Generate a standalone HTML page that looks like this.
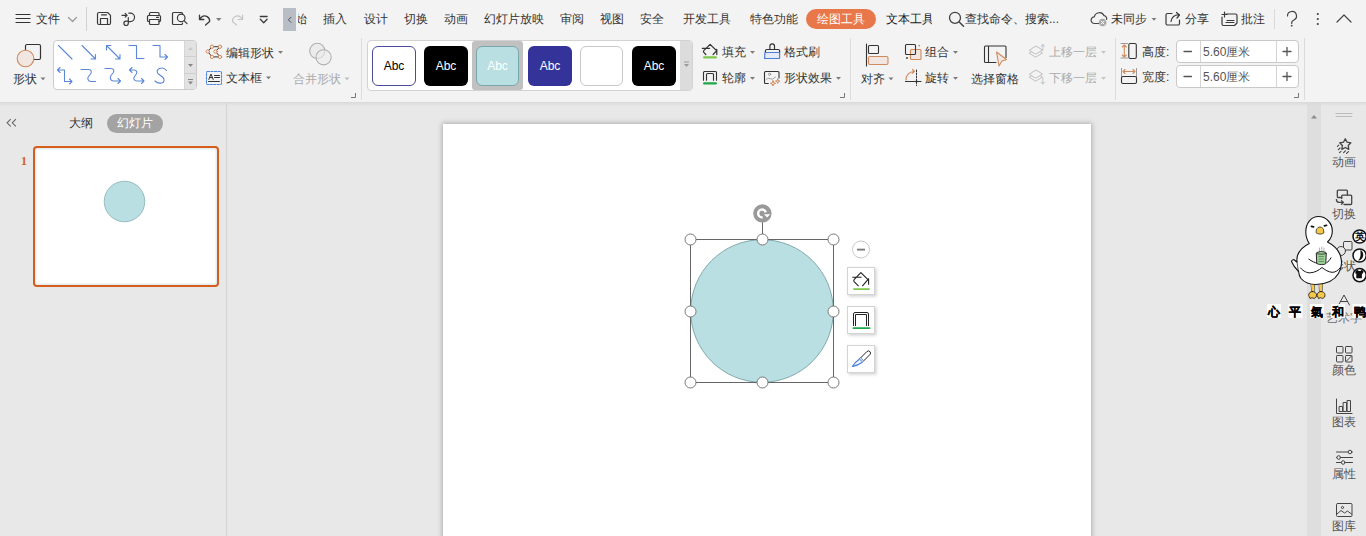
<!DOCTYPE html>
<html><head><meta charset="utf-8">
<style>
*{margin:0;padding:0;box-sizing:border-box}
html,body{width:1366px;height:536px;overflow:hidden;background:#e8e8e8;font-family:"Liberation Sans",sans-serif;color:#333}
.a{position:absolute}
.t{position:absolute;white-space:nowrap;font-size:12px;line-height:14px;color:#333}
svg.ov{position:absolute;left:0;top:0;overflow:visible}
#ribbon{position:absolute;left:0;top:0;width:1366px;height:102px;background:#f3f3f3}
#shadow{position:absolute;left:0;top:102px;width:1366px;height:4px;background:linear-gradient(#d9d9d9,rgba(230,230,230,0))}
#left{position:absolute;left:0;top:102px;width:226px;height:434px;background:#e8e8e8}
#ldiv{position:absolute;left:226px;top:102px;width:1px;height:434px;background:#d4d4d4}
#slide{position:absolute;left:443px;top:124px;width:648px;height:420px;background:#fff;box-shadow:0 0 5px 1px rgba(0,0,0,.25)}
#sbar{position:absolute;left:1307px;top:102px;width:14px;height:434px;background:#dedede}
#rpanel{position:absolute;left:1321px;top:102px;width:45px;height:434px;background:#e8e8e8}
.g{color:#aaa}
.w{color:#fff}
.abc{position:absolute;top:46px;width:44px;height:40px;border-radius:6px;font-size:12px;line-height:40px;text-align:center}
.spin{position:absolute;left:1176px;width:123px;height:23px;border:1px solid #c9c9c9;border-radius:4px;background:#fff}
.spin i{position:absolute;top:0;width:1px;height:21px;background:#d4d4d4}
.rp{position:absolute;left:1321px;width:45px;text-align:center;font-size:12px;line-height:14px;color:#555}
</style></head><body>
<div id="ribbon"></div>
<div id="left"></div>
<div id="ldiv"></div>
<div id="sbar"></div>
<div id="rpanel"></div>
<div id="shadow"></div>
<div id="slide"></div>

<!-- top menu row -->
<div class="t" style="left:36px;top:12px">文件</div>
<div class="a" style="left:283px;top:8px;width:13px;height:23px;background:#b9bdc5"></div>
<div class="a" style="left:298px;top:12px;width:12px;height:16px;overflow:hidden"><div class="t" style="left:-15px;top:0">开始</div></div>
<div class="t" style="left:323px;top:12px">插入</div>
<div class="t" style="left:364px;top:12px">设计</div>
<div class="t" style="left:404px;top:12px">切换</div>
<div class="t" style="left:444px;top:12px">动画</div>
<div class="t" style="left:484px;top:12px">幻灯片放映</div>
<div class="t" style="left:560px;top:12px">审阅</div>
<div class="t" style="left:600px;top:12px">视图</div>
<div class="t" style="left:640px;top:12px">安全</div>
<div class="t" style="left:683px;top:12px">开发工具</div>
<div class="t" style="left:750px;top:12px">特色功能</div>
<div class="a" style="left:806px;top:9px;width:70px;height:20px;border-radius:10px;background:#e8774a"></div>
<div class="t w" style="left:817px;top:12px">绘图工具</div>
<div class="a" style="left:886px;top:12px;width:46px;height:13px;overflow:hidden"><div class="t" style="left:0;top:0;color:#1a1a1a">文本工具</div></div>
<div class="t" style="left:965px;top:12px">查找命令、搜索...</div>
<div class="t" style="left:1111px;top:12px">未同步</div>
<div class="t" style="left:1185px;top:12px">分享</div>
<div class="t" style="left:1241px;top:12px">批注</div>

<!-- ribbon: gallery boxes -->
<div class="a" style="left:53px;top:40px;width:144px;height:50px;border:1px solid #cbcbcb;border-radius:4px;background:#fff"></div>
<div class="a" style="left:184px;top:41px;width:12px;height:48px;background:#e2e2e2;border-left:1px solid #d6d6d6;border-radius:0 3px 3px 0"></div>
<div class="a" style="left:184px;top:56px;width:12px;height:1px;background:#cfcfcf"></div>
<div class="a" style="left:184px;top:73px;width:12px;height:1px;background:#cfcfcf"></div>

<div class="a" style="left:367px;top:40px;width:326px;height:51px;border:1px solid #d2d2d2;border-radius:4px;background:#fff"></div>
<div class="a" style="left:680px;top:41px;width:12px;height:49px;background:#dcdcdc;border-radius:0 3px 3px 0"></div>
<div class="abc" style="left:372px;border:1.6px solid #4b4b9b;background:#fff;color:#000;line-height:39px">Abc</div>
<div class="abc" style="left:424px;background:#000;color:#fff">Abc</div>
<div class="a" style="left:472px;top:41px;width:51px;height:49px;border-radius:3px;background:#c1c1c1"></div>
<div class="abc" style="left:476px;width:43px;border:1.5px solid #7aa7a9;background:#b9dfe2;color:#fff;line-height:39px">Abc</div>
<div class="abc" style="left:528px;background:#333399;color:#fff">Abc</div>
<div class="abc" style="left:580px;width:43px;border:1.5px solid #c8c8c8;background:#fff"></div>
<div class="abc" style="left:632px;background:#000;color:#fff">Abc</div>

<!-- ribbon labels -->
<div class="t" style="left:13px;top:72px">形状</div>
<div class="t" style="left:226px;top:46px">编辑形状</div>
<div class="t" style="left:226px;top:71px">文本框</div>
<div class="t g" style="left:293px;top:72px">合并形状</div>
<div class="t" style="left:722px;top:45px">填充</div>
<div class="t" style="left:784px;top:45px">格式刷</div>
<div class="t" style="left:722px;top:71px">轮廓</div>
<div class="t" style="left:784px;top:71px">形状效果</div>
<div class="t" style="left:861px;top:72px">对齐</div>
<div class="t" style="left:925px;top:45px">组合</div>
<div class="t" style="left:925px;top:71px">旋转</div>
<div class="t" style="left:971px;top:72px">选择窗格</div>
<div class="t g" style="left:1049px;top:45px">上移一层</div>
<div class="t g" style="left:1049px;top:71px">下移一层</div>
<div class="t" style="left:1142px;top:45px">高度:</div>
<div class="t" style="left:1142px;top:70px">宽度:</div>

<div class="spin" style="top:40px"><i style="left:23px"></i><i style="left:99px"></i></div>
<div class="spin" style="top:65px"><i style="left:23px"></i><i style="left:99px"></i></div>
<div class="t" style="left:1203px;top:45px;color:#555">5.60厘米</div>
<div class="t" style="left:1203px;top:70px;color:#555">5.60厘米</div>

<!-- left panel -->
<svg class="ov" width="1366" height="536"><path d="M10.7 119.2l-3.6 3.6 3.6 3.6M15.9 119.2l-3.6 3.6 3.6 3.6" fill="none" stroke="#666" stroke-width="1.1"/></svg>
<div class="t" style="left:69px;top:116px">大纲</div>
<div class="a" style="left:107px;top:114px;width:56px;height:19px;border-radius:10px;background:#a3a3a3"></div>
<div class="t w" style="left:117px;top:116px">幻灯片</div>
<div class="t" style="left:21px;top:154px;color:#d2651f;font-weight:bold;font-size:12px;font-family:'Liberation Serif',serif">1</div>
<div class="a" style="left:33px;top:146px;width:186px;height:141px;border:2px solid #d65e1c;border-radius:4px;background:#fff;box-shadow:inset 0 0 0 1.5px #e6ecee"></div>

<!-- right panel labels -->
<div class="rp" style="top:155px">动画</div>
<div class="rp" style="top:207px">切换</div>
<div class="rp" style="top:259px">形状</div>
<div class="rp" style="top:311px;color:#6b6b6b">艺术字</div>
<div class="rp" style="top:363px">颜色</div>
<div class="rp" style="top:415px">图表</div>
<div class="rp" style="top:467px">属性</div>
<div class="rp" style="top:519px">图库</div>

<svg class="ov" width="1366" height="536" viewBox="0 0 1366 536">
<g fill="none" stroke="#3a3a3a" stroke-width="1.2" stroke-linecap="round" stroke-linejoin="round">
  <!-- hamburger -->
  <path d="M16 14.5H30M16 18.5H30M16 22.5H30" stroke="#333"/>
  <path d="M68.5 17.5L72.5 21.5L76.5 17.5" stroke="#999"/>
  <!-- save -->
  <path d="M97.5 23v-9a1.5 1.5 0 0 1 1.5-1.5h8.6l2.9 2.9v7.6a1.5 1.5 0 0 1-1.5 1.5h-10a1.5 1.5 0 0 1-1.5-1.5z"/>
  <path d="M100.5 24.5v-6h7v6M101.5 14.8h5"/>
  <!-- convert/export -->
  <path d="M122 15.3h5M125.2 13.4l1.9 1.9-1.9 1.9M128.8 13.1h1.5a4.25 4.25 0 0 1 0 8.5h-1.5M128.3 17.5v5.8a2.2 2.2 0 1 1-2.2-2.2h2.2" stroke-width="1.2"/>
  <!-- print -->
  <path d="M149.5 15v-1.5a1 1 0 0 1 1-1h7.5a1 1 0 0 1 1 1V15M149.5 21.5h-1a1 1 0 0 1-1-1v-4a1 1 0 0 1 1-1h11a1 1 0 0 1 1 1v4a1 1 0 0 1-1 1h-1M149.5 19.5h9.5v4a1 1 0 0 1-1 1h-7.5a1 1 0 0 1-1-1zM156.5 17.3h2"/>
  <!-- preview -->
  <path d="M182.5 14v-.5a1 1 0 0 0-1-1h-8a1 1 0 0 0-1 1v10a1 1 0 0 0 1 1h8a1 1 0 0 0 1-1v-.5"/>
  <circle cx="181.2" cy="17.9" r="3.8"/><path d="M184 20.7l3 3"/>
  <!-- undo -->
  <path d="M199.5 15.2v4.3h4.3M199.8 19.2L201.6 17A5 5 0 0 1 209.6 21.6L205.6 25" stroke-width="1.3"/>
  <path d="M242.6 15v4.5h-4.5M242.3 19.2L240.5 17A5 5 0 0 0 232.5 21.6L236.5 25" stroke="#c2c2c2" stroke-width="1.1"/>
  <path d="M260.3 16.5h6.8M260.3 19.3l3.4 3.4 3.4-3.4" stroke-width="1.3"/>
  <path d="M291 17.2l-2.6 2.6 2.6 2.6" stroke="#444" stroke-width=".9"/>
  <!-- search -->
  <circle cx="955" cy="17.8" r="5.5" stroke="#444" stroke-width="1.3"/><path d="M959.2 22l4.3 4.3" stroke="#444" stroke-width="1.5"/>
  <!-- cloud -->
  <path d="M1098.5 23.5h-4a3.3 3.3 0 0 1-.2-6.6a5.2 5.2 0 0 1 9.8-1.2a3.2 3.2 0 0 1 2.6 3.8" stroke="#444" stroke-width="1.2"/>
  <circle cx="1102.6" cy="22.5" r="3.8" fill="#a5a5a5" stroke="none"/>
  <path d="M1101 21l3.2 3.2M1104.2 21l-3.2 3.2" stroke="#fff" stroke-width="1"/>
  <!-- share -->
  <path d="M1172 13.5h-4.5a1.5 1.5 0 0 0-1.5 1.5v8.5a1.5 1.5 0 0 0 1.5 1.5h10.5a1.5 1.5 0 0 0 1.5-1.5v-3.5M1171 21.5a7 7 0 0 1 8-6.5M1176.5 12.5l3 2.5-2.5 3"/>
  <!-- comment -->
  <path d="M1226 14h9.5a1.5 1.5 0 0 1 1.5 1.5v7.5l-2.5 2.5h-11a1.5 1.5 0 0 1-1.5-1.5v-7M1224.5 12v5M1222 14.5h5M1227 20.5h7M1226 22.5h8"/>
  <!-- help, more, collapse -->
  <path d="M1287.5 16a4.5 4.5 0 1 1 6 4.2c-1.3.6-1.8 1.4-1.8 2.8v.5" stroke="#444"/>
  <circle cx="1291.7" cy="25.7" r=".9" fill="#444" stroke="none"/>
  <circle cx="1317.8" cy="14" r="1.1" fill="#444" stroke="none"/>
  <circle cx="1317.8" cy="19" r="1.1" fill="#444" stroke="none"/>
  <circle cx="1317.8" cy="24" r="1.1" fill="#444" stroke="none"/>
  <path d="M1337 22l7-7 7 7" stroke="#444"/>
</g>
<!-- separators -->
<g fill="#d0d0d0">
  <rect x="86" y="7" width="1" height="24"/>
  <rect x="1274" y="9" width="1" height="20" fill="#dadada"/>
  <rect x="361" y="38" width="1" height="62" fill="#dcdcdc"/>
  <rect x="850" y="38" width="1" height="62" fill="#dcdcdc"/>
  <rect x="1115" y="38" width="1" height="62" fill="#dcdcdc"/>
  <rect x="1304" y="38" width="1" height="62" fill="#dcdcdc"/>
</g>
<!-- corner markers -->
<g fill="none" stroke="#777" stroke-width="1">
  <path d="M351 97.5h4.5v-4.5M840 97.5h4.5v-4.5M1294 97.5h4.5v-4.5"/>
</g>
<!-- dropdown arrows -->
<g fill="#7a7a7a">
  <path d="M216 18h5.5l-2.75 3z"/>
  <path d="M40.5 77.5h5l-2.5 2.8z"/>
  <path d="M278 51h5l-2.5 2.8z"/>
  <path d="M266 76.5h5l-2.5 2.8z"/>
  <path d="M344.5 77.5h5l-2.5 2.8z" fill="#bdbdbd"/>
  <path d="M750 51h5l-2.5 2.8z"/>
  <path d="M750 77h5l-2.5 2.8z"/>
  <path d="M836 77h5l-2.5 2.8z"/>
  <path d="M888.5 77.5h5l-2.5 2.8z"/>
  <path d="M953 51h5l-2.5 2.8z"/>
  <path d="M953 77h5l-2.5 2.8z"/>
  <path d="M1101 51h5l-2.5 2.8z" fill="#c5c5c5"/>
  <path d="M1101 77h5l-2.5 2.8z" fill="#c5c5c5"/>
  <path d="M1151.5 18h5l-2.5 2.8z"/>
  <!-- gallery scroll arrows -->
  <path d="M188 50h5l-2.5-3z" fill="#c8c8c8"/>
  <path d="M188 64h5l-2.5 3z" fill="#888"/>
  <path d="M188 81.5h5l-2.5 3z" fill="#888"/>
  <rect x="188" y="79" width="5" height="1" fill="#888"/>
  <path d="M684 64h5l-2.5 3z" fill="#999"/>
  <rect x="684" y="61.5" width="5" height="1" fill="#999"/>
</g>
</svg>


<!-- ribbon icons -->
<svg class="ov" width="1366" height="536" viewBox="0 0 1366 536">
<g fill="none" stroke-linecap="round" stroke-linejoin="round">
  <!-- shape -->
  <rect x="25.5" y="44.5" width="15" height="15" rx="1.5" stroke="#333" stroke-width="1.2"/>
  <circle cx="25.5" cy="58.5" r="8.3" fill="#f1e6e1" stroke="#d08a5c" stroke-width="1.1"/>
  <!-- line gallery -->
  <g stroke="#5b88d6" stroke-width="1.1">
    <path d="M58.5 45.5l13.5 13.5"/>
    <path d="M82 45.5l13.5 13.5M95.5 59v-4.5M95.5 59h-4.5"/>
    <path d="M106.5 45.5l13.5 13.5M106.5 45.5v4.5M106.5 45.5h4.5M120 59v-4.5M120 59h-4.5"/>
    <path d="M129 45.5h7.5v13h7.5"/>
    <path d="M153 45.5h7v11.5h7.5M165 54.5l2.5 2.5-2.5 2.5"/>
    <path d="M64.5 70h-7M60 67.5l-2.5 2.5 2.5 2.5M64.5 70v11.5h7.5M69.5 79l2.5 2.5-2.5 2.5"/>
    <path d="M81 69.5h7.5c3 0 3.5 2.5 2 4.5l-2 2.5c-1.5 2-.5 5 2.5 5h4.5"/>
    <path d="M105 68.5h6c3 0 3.5 2.5 2 4.5l-2 2.5c-1.5 2-.5 5.5 2.5 5.5h7M118 78.5l2.5 2.5-2.5 2.5"/>
    <path d="M129.5 70h4.5c3 0 3.5 2.5 2 4.5l-1.5 2c-1.5 2-.5 4.5 2.5 4.5h6.5M132 67.5l-2.5 2.5 2.5 2.5M141.5 78.5l2.5 2.5-2.5 2.5"/>
    <path d="M166.5 70.5c-1.5-2-4.5-3-7-2-3 1.2-3 4-1 5.5l4 3c2.5 2 2 5.5-1 6-2.5.5-5-.5-6.5-2"/>
  </g>
  <!-- edit shape -->
  <path d="M212 46.7h8M212 46.7l-4.2 4.8 4.2 5.4h8l-4.5-5.4 4.5-4.8" stroke="#333" stroke-width="1"/>
  <g fill="#f3f3f3" stroke="#d08a5c" stroke-width="1">
    <circle cx="212" cy="46.7" r="1.7"/><circle cx="220" cy="46.7" r="1.7"/>
    <circle cx="207.8" cy="51.5" r="1.7"/><circle cx="215.5" cy="51.5" r="1.7"/>
    <circle cx="212" cy="56.9" r="1.7"/><circle cx="220" cy="56.9" r="1.7"/>
  </g>
  <!-- textbox -->
  <rect x="206.5" y="71.5" width="15" height="13" rx="1" stroke="#4a86e0" stroke-width="1.1" stroke-dasharray="2.2 1.3"/>
  <path d="M208.8 79.5l2.2-5.5 2.2 5.5M209.6 77.6h2.8M214.5 75.5h5M214.5 77.5h5M208.5 81.5h11" stroke="#333" stroke-width="1"/>
  <!-- merge -->
  <circle cx="317.3" cy="50.9" r="7.6" fill="#ececec" stroke="#b0b0b0" stroke-width="1.1"/>
  <circle cx="323.6" cy="57.3" r="7.6" fill="#ececec" fill-opacity=".6" stroke="#b0b0b0" stroke-width="1.1"/>
  <!-- fill -->
  <path d="M702.3 48.3h7.3M705.8 54.5l-2-2.1a1.3 1.3 0 0 1 0-1.8l6.3-6.2 6.6 6.3-3.6 3.8M716.8 49.4v5.2" stroke="#333" stroke-width="1.2"/>
  <rect x="703" y="56.3" width="14" height="2.3" rx="1.15" fill="#7fc84e"/>
  <!-- format brush -->
  <path d="M769.9 49.5v-3.4a2.3 2.3 0 0 1 4.6 0v3.4M765.4 52.5v-1.5a1.5 1.5 0 0 1 1.5-1.5h11.2a1.5 1.5 0 0 1 1.5 1.5v1.5" stroke="#333" stroke-width="1.2"/>
  <path d="M765 52.5h14.6v5.2a.8.8 0 0 1-.8.8h-14.3z" fill="#e5eaf4" stroke="#4a7fd8" stroke-width="1.2"/>
  <!-- outline -->
  <path d="M703.5 80.8v-8.3a1 1 0 0 1 1-1h11a1 1 0 0 1 1 1v8.3M706.5 80.8v-6.3a1 1 0 0 1 1-1h5a1 1 0 0 1 1 1v6.3" stroke="#333" stroke-width="1.1" stroke-linecap="butt"/>
  <rect x="703" y="82.3" width="14" height="2.3" rx="1.15" fill="#1fa84a"/>
  <!-- shape effect -->
  <path d="M768.3 83.5h-2.8a1 1 0 0 1-1-1v-10a1 1 0 0 1 1-1h12.5a1 1 0 0 1 1 1v5.5" stroke="#333" stroke-width="1.1"/>
  <circle cx="769.6" cy="74.3" r="1.1" stroke="#888" stroke-width=".8"/>
  <path d="M766 79.8c1-1 2-1.8 3-1.5 1 .3 1.8 1 3 .8 1.2-.2 2-1.2 3.5-2" stroke="#888" stroke-width=".8"/>
  <path d="M773 80.8l.7 1.9 1.9.7-1.9.7-.7 1.9-.7-1.9-1.9-.7 1.9-.7zM777.7 79l.6 1.6 1.6.6-1.6.6-.6 1.6-.6-1.6-1.6-.6 1.6-.6z" fill="#f3f3f3" stroke="#d08a5c" stroke-width="1"/>
  <!-- align -->
  <path d="M866.5 44v22" stroke="#333" stroke-width="1.1"/>
  <rect x="868.5" y="45.5" width="10" height="8" rx="1" stroke="#333" stroke-width="1.1"/>
  <rect x="868.5" y="56.5" width="19.5" height="8" rx="1.5" fill="#f1e6e1" stroke="#d08a5c" stroke-width="1.1"/>
  <!-- group -->
  <path d="M910.5 54.5h-4a1 1 0 0 1-1-1v-8a1 1 0 0 1 1-1h8a1 1 0 0 1 1 1v4" stroke="#333" stroke-width="1.1"/>
  <rect x="910.5" y="49.5" width="10.5" height="10" rx="1" fill="#f1e6e1" stroke="#d08a5c" stroke-width="1.1"/>
  <path d="M915.5 49.5v4a1 1 0 0 1-1 1h-4" stroke="#333" stroke-width="1.1"/>
  <circle cx="919.2" cy="45.6" r=".9" fill="#d08a5c"/>
  <circle cx="907" cy="58" r=".9" fill="#333"/>
  <!-- rotate -->
  <path d="M906 80a8 8 0 0 1 8.5-8.5M912.5 69.5l2 2-2.3 1.8" stroke="#d08a5c" stroke-width="1.1"/>
  <path d="M905.5 81.5h15.5" stroke="#333" stroke-width="1.1"/>
  <path d="M916.5 70v15.5" stroke="#333" stroke-width="1" stroke-dasharray="1.6 1.4"/>
  <circle cx="916.5" cy="81.5" r="1.1" fill="#333"/>
  <!-- selection pane -->
  <path d="M996 62.5h-10.5a1 1 0 0 1-1-1v-14.5a1 1 0 0 1 1-1h19.5a1 1 0 0 1 1 1v10.5M988.5 46v16.5" stroke="#333" stroke-width="1.1"/>
  <path d="M996.5 52l10 7.5-4.5 1.5-3 5z" fill="#f1e6e1" stroke="#d08a5c" stroke-width="1.1"/>
  <!-- move up / down -->
  <g stroke="#c0c0c0" stroke-width="1">
    <path d="M1029.5 53l6.5-4 6.5 4-6.5 4z" fill="#f3f3f3"/>
    <path d="M1029.5 50l6.5-4 6.5 4-6.5 4z" fill="#f3f3f3"/>
    <path d="M1042.8 44.5v6M1041 46.3l1.8-1.8 1.8 1.8"/>
    <path d="M1029.5 77l6.5-4 6.5 4-6.5 4z" fill="#f3f3f3"/>
    <path d="M1029.5 74l6.5-4 6.5 4-6.5 4z" fill="#f3f3f3"/>
    <path d="M1042.8 78v6M1041 82.2l1.8 1.8 1.8-1.8"/>
  </g>
  <!-- height / width -->
  <path d="M1121 43.5h6.5M1121 58h6.5M1121.5 76.5v-8M1136.5 76.5v-8" stroke="#999" stroke-width="1"/>
  <path d="M1124.3 45v12M1122.3 47l2-2 2 2M1122.3 55l2 2 2-2" stroke="#d08a5c" stroke-width="1.1"/>
  <rect x="1128.8" y="43.5" width="7.5" height="15" rx="1.5" stroke="#333" stroke-width="1.1"/>
  <path d="M1123 71.5h12M1125 69.5l-2 2 2 2M1133 69.5l2 2-2 2" stroke="#d08a5c" stroke-width="1.1"/>
  <rect x="1121.5" y="76.5" width="15" height="7" rx="1.5" stroke="#333" stroke-width="1.1"/>
  <!-- spin +/- -->
  <path d="M1184 51.5h7.5M1184 76.5h7.5M1283 51.5h8M1287 47.5v8M1283 76.5h8M1287 72.5v8" stroke="#555" stroke-width="1.3"/>
</g>
</svg>

<!-- canvas objects -->
<svg class="ov" width="1366" height="536" viewBox="0 0 1366 536">
  <circle cx="124.5" cy="201.5" r="20.3" fill="#b9dfe2" stroke="#86aeb1" stroke-width="0.8"/>
  <circle cx="762" cy="311" r="71.3" fill="#b9dfe2" stroke="#80a9ac" stroke-width="1"/>
  <rect x="690.5" y="239.5" width="143" height="143" fill="none" stroke="#666" stroke-width="1"/>
  <path d="M762.5 222v17" stroke="#666" stroke-width="1"/>
  <circle cx="762.4" cy="213.4" r="9.2" fill="#999"/>
  <path d="M762.6 217.3A3.9 3.9 0 1 1 765.8 212.3" fill="none" stroke="#fff" stroke-width="2.4"/>
  <path d="M763.9 214.3h6.4l-3.2 3.3z" fill="#fff"/>
  <g fill="#fff" stroke="#777" stroke-width="1">
    <circle cx="690.5" cy="239.5" r="5.5"/><circle cx="762.5" cy="239.5" r="5.5"/><circle cx="833.5" cy="239.5" r="5.5"/>
    <circle cx="690.5" cy="311.5" r="5.5"/><circle cx="833.5" cy="311.5" r="5.5"/>
    <circle cx="690.5" cy="382.5" r="5.5"/><circle cx="762.5" cy="382.5" r="5.5"/><circle cx="833.5" cy="382.5" r="5.5"/>
  </g>
  <circle cx="861" cy="249.5" r="8.5" fill="#fff" stroke="#c8c8c8" stroke-width="1"/>
  <rect x="857" y="248.7" width="8" height="1.8" fill="#777"/>
  <defs><filter id="sh" x="-30%" y="-30%" width="160%" height="160%"><feDropShadow dx="1.5" dy="1.5" stdDeviation="1.5" flood-color="#000" flood-opacity=".18"/></filter></defs>
  <g fill="#fff" stroke="#d4d4d4" stroke-width="1" filter="url(#sh)">
    <rect x="847.5" y="267.5" width="27" height="27"/>
    <rect x="847.5" y="306.5" width="27" height="27"/>
    <rect x="847.5" y="345.5" width="27" height="27"/>
  </g>
  <g fill="none" stroke="#222" stroke-width="1.1" stroke-linejoin="round" stroke-linecap="round">
    <path d="M852.3 277.3h9.3M858.6 286.2l-4.3-4.3a1.8 1.8 0 0 1 0-2.5l6.6-6.8 7 7-5.6 6.6M868.6 278.3v6.4" stroke-linecap="butt"/>
  </g>
  <g fill="none" stroke="#222" stroke-width="1" >
    <path d="M853.5 326v-12a1.5 1.5 0 0 1 1.5-1.5h12a1.5 1.5 0 0 1 1.5 1.5v12M855.5 326v-11.5h11v11.5"/>
  </g>
  <rect x="853" y="288.3" width="17" height="1.6" rx=".8" fill="#7fc84e"/>
  <rect x="852.5" y="327.2" width="18" height="1.8" rx=".9" fill="#1fa84a"/>
  <g fill="none" stroke-width="1.1" stroke-linejoin="round" stroke-linecap="round">
    <path d="M860.6 357.9l6.3-6.3a2.1 2.1 0 0 1 3 3l-6.3 6.3" stroke="#222" stroke-width="1"/>
    <path d="M860.6 357.9l3 3-1.6 1.6-3-3z" stroke="#4a7fd8" stroke-width="1" fill="#fff"/>
    <path d="M859 359.5c-3 2-5.2 4.3-6.6 7 2.8-.5 6.3-1.6 9.6-4" stroke="#4a7fd8" stroke-width="1.1" fill="#eef2fb"/>
    <path d="M860.2 359.4l1.7 1.7" stroke="#4a7fd8" stroke-width=".8"/>
  </g>
</svg>

<!-- right panel icons -->
<svg class="ov" width="1366" height="536"><path d="M1311 118.5h6l-3-3.5z" fill="#8a8a8a"/></svg>
<svg class="ov" width="1366" height="536" viewBox="0 0 1366 536">
<g fill="none" stroke="#444" stroke-width="1" stroke-linejoin="round" stroke-linecap="round">
  <path d="M1336 113.5h16M1336 116.5h16" stroke="#bcbcbc"/>
  <path d="M1345.3 138.8l1.8 3.4 3.8.6-2.7 2.7.6 3.8-3.5-1.8-3.5 1.8.6-3.8-2.7-2.7 3.8-.6z" stroke-width="1.3"/>
  <path d="M1337.4 146.3l1.4-1.2M1338.3 149.6l1.8-1.6M1339.5 152.6l1.5-1.3M1343.6 152.6l1.8-1.8M1346.5 153.4l2-1.8" stroke-width="1.1"/>
  <path d="M1341.7 197.5h-3.4a1 1 0 0 1-1-1v-5.4a1 1 0 0 1 1-1h8.1a1 1 0 0 1 1 1v4.1" stroke-width="1.3"/>
  <path d="M1341.7 198.5v-2.3a1 1 0 0 1 1-1h8a1 1 0 0 1 1 1v7.3a1 1 0 0 1-1 1h-6.7" stroke-width="1.3"/>
  <path d="M1336.4 199.3c0 2 1 3.1 2.5 3.1h4.5M1341.5 200.6l1.9 1.8-1.9 1.8" stroke-width="1.3"/>
  <rect x="1336.5" y="346.5" width="6.5" height="6.5" rx=".8"/>
  <rect x="1345.5" y="346.5" width="6.5" height="6.5" rx=".8"/>
  <rect x="1336.5" y="355.5" width="6.5" height="6.5" rx=".8"/>
  <rect x="1345.5" y="355.5" width="6.5" height="6.5" rx=".8"/>
  <path d="M1346 361.5l5.5-5.5"/>
  <path d="M1336.5 399v14.5h15.5"/>
  <rect x="1339.5" y="406.5" width="3" height="5"/>
  <rect x="1343.5" y="402.5" width="3" height="9"/>
  <rect x="1347.5" y="400.5" width="3" height="11"/>
  <path d="M1336.5 452h11.5M1336.5 457.5h16M1336.5 462.5h16M1352 452h0"/>
  <circle cx="1350" cy="452" r="1.8" fill="#e8e8e8"/>
  <circle cx="1338.7" cy="457.5" r="1.8" fill="#e8e8e8"/>
  <circle cx="1343.2" cy="462.5" r="1.8" fill="#e8e8e8"/>
  <rect x="1336.5" y="503.5" width="15.5" height="13" rx="1"/>
  <circle cx="1342.5" cy="507.5" r="1.1"/>
  <path d="M1337 514l4-3.5 3.5 2.5 3-2 4 3"/>
  <!-- shape icon -->
  <rect x="1343.5" y="241.5" width="8.5" height="8.5" rx="1"/>
  <circle cx="1341" cy="251" r="4.5" fill="#e8e8e8"/>
  <!-- art text A -->
  <path d="M1338.5 305l5.5-10 5.5 10M1340.5 301.5h7"/>
</g>
<!-- duck -->
<g stroke="#141414" stroke-width="1.1" stroke-linejoin="round" stroke-linecap="round">
  <path d="M1311 283l.8 8.5M1314.5 284l-.5 7.5M1319.2 284l.3 7.5M1322.5 283.5l-.5 8" fill="none" stroke-width=".8"/>
  <path d="M1311 284l.8 8 2.2-.3.5-7.7zM1319 284l.5 7.7 2.2.3.8-8z" fill="#f5c84a" stroke="none"/>
  <path d="M1312.5 291.5c-2.5 0-4 2-3.8 4l1.3 3 2-.8 2.2.8 2-1.5.3-2.5c-.5-1.8-2-3-4-3zM1321 291.5c-2.5 0-4 2-3.8 4l1.3 3 2-.8 2.2.8 2-1.5.3-2.5c-.5-1.8-2-3-4-3z" fill="#f5c84a" stroke-width=".8"/>
  <path d="M1309.3 243.5C1307.3 240.5 1305.8 236.5 1305.8 232C1305.8 223 1311.3 216.5 1318.5 216.5C1326 216.5 1332.3 223 1332.3 231C1332.3 235.5 1330.3 239.5 1327.5 242C1332.5 244.5 1338 249 1340.2 255C1342.2 261 1341.8 268 1338.5 273.5C1335 279.5 1328.5 284 1316 284.5C1309 284.5 1304 282 1301 278.5C1299.5 276.5 1298.8 274 1298.6 271.5C1296 269 1293 265 1291.5 261.5C1292 260 1293.2 259.3 1294.2 259.8C1295 260.5 1296 261.5 1297 262C1296.8 259.5 1297 257.5 1297.5 255.5C1299.5 250 1304 246 1309.3 243.5Z" fill="#fff"/>
  <path d="M1297 262c.3 3 .8 6 1.6 9.5" fill="none" stroke-width=".7"/>
  <path d="M1300.6 268c3 3.5 6.5 5 9.7 4.8 4.5-.2 8.5-2.5 11.7-5.3 3 2.5 6.5 4.5 10 4.8 3 .2 6-1.5 8.4-4.8" fill="none" stroke-width="1"/>
  <path d="M1308.8 259.2c3 2 6 3.5 9.2 4.4M1331 257.8c-1 2-2.5 3.8-4.2 4.8" fill="none" stroke-width="1"/>
  <path d="M1311.4 226.4l2.2.5M1324.4 225.9l2.2-.6" stroke-width="1.7"/>
  <path d="M1316.5 229.5c1-2 2-2.5 3.5-2.5s2.5.5 3.5 2.5l.3 3.5c-1.5 1.5-6 1.5-7.5 0z" fill="#f5c84a" stroke-width=".7"/>
  <path d="M1316.3 253c0-1 4.5-1.5 5-1.5s5 .5 5 1.5l-.5 10.5c-.5 1.5-8.5 1.5-9 0z" fill="#9dcd98" stroke-width=".9"/>
  <path d="M1316.5 253.5c1.5 1 8 1 9.5 0" fill="none" stroke-width=".7"/>
  <path d="M1319 256.5h4.5M1319 259h4.5M1319 261.5h4.5" stroke="#3e6e3b" stroke-width=".6"/>
  <path d="M1319.5 251v-3M1321.8 250.5v-3.5M1324 251v-3" stroke="#666" stroke-width=".5"/>
</g>
<!-- keyboard circles -->
<g fill="#fff" stroke="#111" stroke-width="1.5">
  <circle cx="1359.6" cy="236.5" r="6.6"/>
  <circle cx="1359.6" cy="255.5" r="6.6"/>
  <circle cx="1359.6" cy="275.2" r="6.6"/>
</g>
<text x="1354.6" y="240.3" font-size="10" font-weight="bold" fill="#111" font-family="Liberation Sans">英</text>
<path d="M1360.5 250c2.5 1.5 3.2 4 2.5 6.5-.7 2.5-2.8 4-5 4.2 1.5-1.5 2.3-3.5 2.5-5.5.2-2-.2-3.8-0-5.2z" fill="#111"/>
<path d="M1355.5 271l2 -1.2 1.2 1.3h1.8l1.2-1.3 2 1.2-.8 2.5-1 .3v4.5h-5.6v-4.5l-1-.3z" fill="#111"/>
<!-- calligraphy -->
<g fill="#fff" opacity=".92">
  <rect x="1267" y="304" width="14" height="14"/>
  <rect x="1288.5" y="304" width="14" height="14"/>
  <rect x="1310" y="304" width="14" height="14"/>
  <rect x="1331" y="304" width="14" height="14"/>
  <rect x="1352.5" y="304" width="14" height="14"/>
</g>
</svg>
<div class="t" style="left:1268px;top:304.5px;font-size:12px;line-height:14px;font-weight:bold;color:#000;letter-spacing:9.4px;-webkit-text-stroke:.25px #000;font-family:'Liberation Serif',serif">心平氣和鸭</div>
</body></html>
